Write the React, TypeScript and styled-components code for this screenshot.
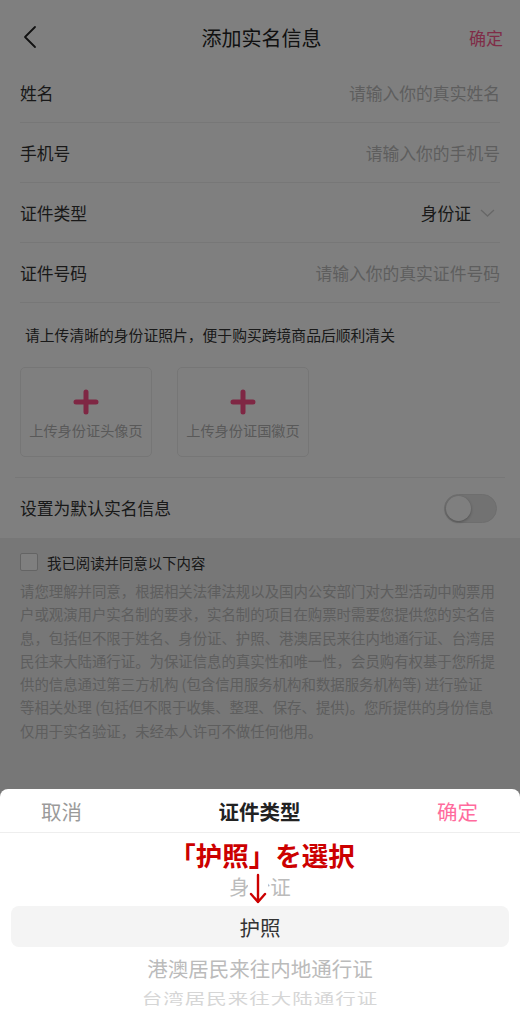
import React from "react";
import styled, { createGlobalStyle } from "styled-components";

const GlobalStyle = createGlobalStyle`
  html, body { margin: 0; padding: 0; background: #fff; }
  body { font-family: "Noto Sans CJK SC", "Noto Sans", sans-serif; }
  * { box-sizing: border-box; }
`;

const Page = styled.div`
  position: relative;
  width: 520px;
  height: 1024px;
  overflow: hidden;
  background: #eeeeee;
  display: flex;
  flex-direction: column;
`;

const Form = styled.div`
  background: #fff;
  display: flex;
  flex-direction: column;
`;

const Header = styled.header`
  height: 63px;
  padding: 11px 17px 0 20px;
  display: grid;
  grid-template-columns: 60px 1fr 60px;
  align-items: center;
`;

const BackBtn = styled.div`
  display: flex;
  align-items: center;
  padding-left: 2px;
`;

const Title = styled.h1`
  margin: 0;
  text-align: center;
  font-size: 20px;
  font-weight: 400;
  color: #222;
`;

const HeaderAction = styled.div`
  text-align: right;
  font-size: 17px;
  color: #ff5a90;
`;

const Row = styled.div`
  height: 60px;
  margin: 0 20px;
  border-bottom: 1px solid #efefef;
  display: flex;
  align-items: center;
  justify-content: space-between;
  padding-top: 1px;
`;

const Label = styled.span`
  font-size: 16.8px;
  color: #333;
`;

const Placeholder = styled.span`
  font-size: 16.8px;
  color: #bdbdbd;
`;

const Value = styled.span`
  display: flex;
  align-items: center;
  gap: 9px;
  font-size: 16.8px;
  color: #333;
  padding-right: 5px;
`;

const Note = styled.p`
  margin: 0;
  padding: 21px 25px 0;
  font-size: 14.8px;
  line-height: 21px;
  color: #333;
`;

const Uploads = styled.div`
  display: flex;
  gap: 25px;
  padding: 22px 20px 20px 5px;
  border-bottom: 1px solid #efefef;
  margin: 0 15px;
`;

const UploadBox = styled.div`
  width: 132px;
  height: 90px;
  border: 1px solid #ececec;
  border-radius: 5px;
  display: flex;
  flex-direction: column;
  align-items: center;
  padding-top: 21px;
  gap: 5px;
`;

const UploadText = styled.span`
  font-size: 14.2px;
  color: #b3b3b3;
`;

const ToggleRow = styled.div`
  height: 60px;
  padding: 0 23px 0 20px;
  display: flex;
  align-items: center;
  justify-content: space-between;
`;

const Track = styled.div`
  width: 53px;
  height: 29px;
  border-radius: 15px;
  background: #e4e4e4;
  border: 1px solid #dcdcdc;
  position: relative;
`;

const Knob = styled.div`
  position: absolute;
  left: 1px;
  top: 1px;
  width: 25px;
  height: 25px;
  border-radius: 50%;
  background: #fff;
  box-shadow: 0 1px 3px rgba(0, 0, 0, 0.3);
`;

const Agreement = styled.section`
  padding: 15px 20px 0;
  display: flex;
  flex-direction: column;
`;

const CheckRow = styled.label`
  display: flex;
  align-items: center;
  gap: 9px;
  height: 18px;
`;

const CheckBox = styled.span`
  width: 18px;
  height: 18px;
  border: 1px solid #c8c8c8;
  border-radius: 2px;
  background: #fff;
`;

const CheckText = styled.span`
  font-size: 14.4px;
  color: #333;
`;

const Terms = styled.div`
  margin-top: 8px;
  font-size: 14.4px;
  line-height: 23.3px;
  color: #bcbcbc;
`;

const TermLine = styled.div`
  white-space: nowrap;
`;

const Mask = styled.div`
  position: absolute;
  inset: 0;
  background: rgba(0, 0, 0, 0.5);
`;

const Sheet = styled.div`
  position: absolute;
  left: 0;
  right: 0;
  bottom: 0;
  height: 235px;
  background: #fff;
  border-radius: 8px 8px 0 0;
  display: flex;
  flex-direction: column;
  overflow: hidden;
`;

const SheetHeader = styled.div`
  height: 44px;
  border-bottom: 1px solid #eeeeee;
  display: flex;
  align-items: center;
  justify-content: space-between;
  padding: 0 42px 0 41px;
`;

const SheetBtn = styled.span<{ $tone: "cancel" | "ok" }>`
  font-size: 20.5px;
  color: ${(p) => (p.$tone === "ok" ? "#ff6b9d" : "#9a9a9a")};
`;

const SheetTitle = styled.span`
  font-size: 20.5px;
  font-weight: 700;
  color: #222;
`;

const Wheel = styled.div`
  display: flex;
  flex-direction: column;
  padding-top: 32px;
`;

const WheelItem = styled.div<{ $kind: "near" | "selected" | "far" }>`
  height: ${(p) => (p.$kind === "far" ? "20px" : "41px")};
  margin: 0 11px;
  display: flex;
  align-items: center;
  justify-content: center;
  font-size: 20.5px;
  letter-spacing: ${(p) => (p.$kind === "far" ? "1px" : "0")};
  border-radius: 8px;
  background: ${(p) => (p.$kind === "selected" ? "#f4f4f4" : "transparent")};
  color: ${(p) =>
    p.$kind === "selected" ? "#333" : p.$kind === "far" ? "#d6d6d6" : "#bbbbbb"};
  transform: ${(p) => (p.$kind === "far" ? "scaleY(0.7)" : "none")};
  white-space: nowrap;
`;

const Annotation = styled.div`
  position: absolute;
  left: 0;
  right: 0;
  top: 838px;
  display: flex;
  flex-direction: column;
  align-items: center;
  pointer-events: none;
`;

const AnnoText = styled.div`
  font-family: "Noto Sans CJK JP", "Noto Sans CJK SC", sans-serif;
  font-size: 26.5px;
  line-height: 34px;
  font-weight: 700;
  color: #cc0000;
  margin-left: 4px;
`;

const ArrowWrap = styled.div`
  width: 20px;
  height: 34px;
  margin-left: -4px;
  background: #fff;
  border-radius: 0 0 10px 10px;
  display: flex;
  justify-content: center;
`;

const terms = [
  "请您理解并同意，根据相关法律法规以及国内公安部门对大型活动中购票用",
  "户或观演用户实名制的要求，实名制的项目在购票时需要您提供您的实名信",
  "息，包括但不限于姓名、身份证、护照、港澳居民来往内地通行证、台湾居",
  "民往来大陆通行证。为保证信息的真实性和唯一性，会员购有权基于您所提",
  "供的信息通过第三方机构 (包含信用服务机构和数据服务机构等) 进行验证",
  "等相关处理 (包括但不限于收集、整理、保存、提供)。您所提供的身份信息",
  "仅用于实名验证，未经本人许可不做任何他用。",
];

const rows = [
  { label: "姓名", hint: "请输入你的真实姓名" },
  { label: "手机号", hint: "请输入你的手机号" },
];

const PlusIcon = () => (
  <svg width="26" height="26" viewBox="0 0 26 26">
    <path d="M13 3v20M3 13h20" stroke="#ff4f88" strokeWidth="5" strokeLinecap="round" />
  </svg>
);

export default function App() {
  return (
    <>
      <GlobalStyle />
      <Page>
        <Form>
          <Header>
            <BackBtn>
              <svg width="16" height="24" viewBox="0 0 16 24">
                <path d="M13 2 L3 12 L13 22" fill="none" stroke="#222" strokeWidth="1.8" strokeLinecap="round" strokeLinejoin="round" />
              </svg>
            </BackBtn>
            <Title>添加实名信息</Title>
            <HeaderAction>确定</HeaderAction>
          </Header>
          {rows.map((r) => (
            <Row key={r.label}>
              <Label>{r.label}</Label>
              <Placeholder>{r.hint}</Placeholder>
            </Row>
          ))}
          <Row>
            <Label>证件类型</Label>
            <Value>
              身份证
              <svg width="15" height="8" viewBox="0 0 15 8">
                <path d="M1 1 L7.5 7 L14 1" fill="none" stroke="#cfcfcf" strokeWidth="1.4" />
              </svg>
            </Value>
          </Row>
          <Row>
            <Label>证件号码</Label>
            <Placeholder>请输入你的真实证件号码</Placeholder>
          </Row>
          <Note>请上传清晰的身份证照片，便于购买跨境商品后顺利清关</Note>
          <Uploads>
            <UploadBox>
              <PlusIcon />
              <UploadText>上传身份证头像页</UploadText>
            </UploadBox>
            <UploadBox>
              <PlusIcon />
              <UploadText>上传身份证国徽页</UploadText>
            </UploadBox>
          </Uploads>
          <ToggleRow>
            <Label>设置为默认实名信息</Label>
            <Track>
              <Knob />
            </Track>
          </ToggleRow>
        </Form>
        <Agreement>
          <CheckRow>
            <CheckBox />
            <CheckText>我已阅读并同意以下内容</CheckText>
          </CheckRow>
          <Terms>
            {terms.map((t) => (
              <TermLine key={t}>{t}</TermLine>
            ))}
          </Terms>
        </Agreement>
        <Mask />
        <Sheet>
          <SheetHeader>
            <SheetBtn $tone="cancel">取消</SheetBtn>
            <SheetTitle>证件类型</SheetTitle>
            <SheetBtn $tone="ok">确定</SheetBtn>
          </SheetHeader>
          <Wheel>
            <WheelItem $kind="near">身份证</WheelItem>
            <WheelItem $kind="selected">护照</WheelItem>
            <WheelItem $kind="near">港澳居民来往内地通行证</WheelItem>
            <WheelItem $kind="far">台湾居民来往大陆通行证</WheelItem>
          </Wheel>
        </Sheet>
        <Annotation>
          <AnnoText>「护照」を選択</AnnoText>
          <ArrowWrap>
            <svg width="20" height="34" viewBox="0 0 20 34">
              <path d="M10 3 V30 M3 22 L10 30 L17 22" fill="none" stroke="#cc0000" strokeWidth="2.4" strokeLinecap="round" strokeLinejoin="round" />
            </svg>
          </ArrowWrap>
        </Annotation>
      </Page>
    </>
  );
}
